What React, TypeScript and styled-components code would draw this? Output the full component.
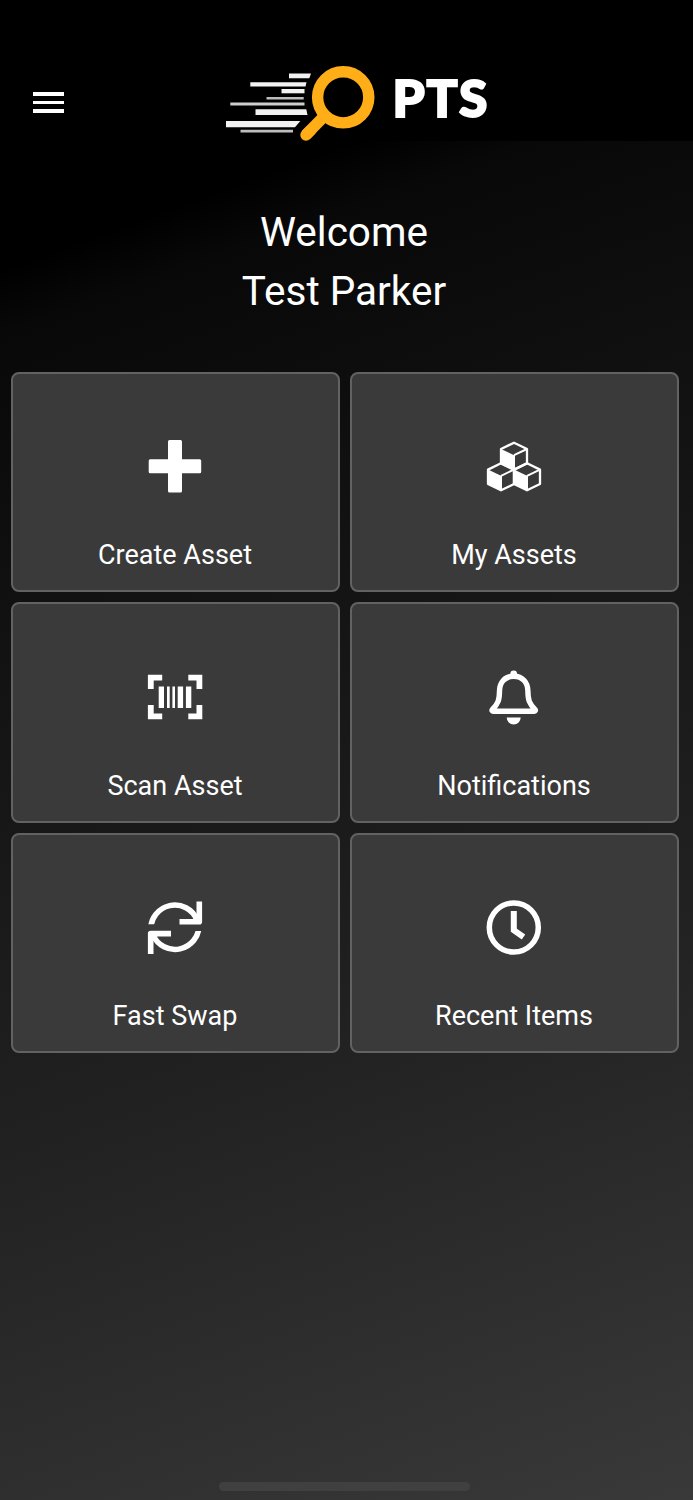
import React from 'react';
import styled, { createGlobalStyle } from 'styled-components';

const GlobalStyle = createGlobalStyle`
  * { box-sizing: border-box; }
  body { margin: 0; background: #000; }
`;

const Screen = styled.div`
  width: 693px;
  height: 1500px;
  display: flex;
  flex-direction: column;
  background: #000;
  color: #fff;
  font-family: Roboto, 'Liberation Sans', sans-serif;
  overflow: hidden;
`;

const Header = styled.header`
  flex: none;
  height: 141px;
  padding: 64px 0 0 33px;
  display: flex;
  align-items: flex-start;
`;

const MenuButton = styled.button`
  width: 31px;
  height: 21px;
  margin: 28px 162px 0 0;
  padding: 0;
  border: 0;
  background: none;
  display: flex;
  flex-direction: column;
  justify-content: space-between;
`;

const MenuLine = styled.span`
  display: block;
  height: 3.6px;
  background: #fff;
`;

const Logo = styled.svg`
  display: block;
  width: 264px;
  height: 77px;
`;

const Main = styled.main`
  flex: 1;
  display: flex;
  flex-direction: column;
  background: linear-gradient(160deg, #000 8%, #080808 12%, #141414 36%, #212121 63%, #393939 100%);
`;

const Welcome = styled.h1`
  margin: 0;
  padding: 62px 5px 0 0;
  height: 230.5px;
  font-size: 40.5px;
  line-height: 58.5px;
  font-weight: 400;
  text-align: center;
`;

const Grid = styled.div`
  display: grid;
  grid-template-columns: 329px 329px;
  grid-auto-rows: 220.5px;
  gap: 10px;
  padding-left: 11px;
`;

const Tile = styled.button`
  display: flex;
  flex-direction: column;
  align-items: center;
  padding: 62.5px 1px 0 0;
  border: 2px solid #626262;
  border-radius: 8px;
  background: #3a3a3a;
  color: #fff;
  font: inherit;
`;

const TileIcon = styled.svg`
  width: 60px;
  height: 60px;
  display: block;
  fill: #fff;
`;

const TileLabel = styled.span`
  margin-top: 42px;
  font-size: 27px;
  line-height: 34px;
`;

const HomeIndicator = styled.div`
  width: 251px;
  height: 9px;
  margin: auto 0 9px 219px;
  border-radius: 5px;
  background: #404040;
`;

const PlusIcon = () => (
  <TileIcon viewBox="0 0 60 60">
    <path d="M24.500 4h11a1.500 1.500 0 0 1 1.500 1.500V23.300H54.700a1.500 1.500 0 0 1 1.500 1.500V35.700a1.500 1.500 0 0 1-1.500 1.500H37V55a1.500 1.500 0 0 1-1.500 1.500H24.500a1.500 1.500 0 0 1-1.500-1.500V37.200H5.200a1.500 1.500 0 0 1-1.500-1.500V24.800a1.500 1.500 0 0 1 1.500-1.500H23V5.500A1.500 1.500 0 0 1 24.500 4z" />
  </TileIcon>
);

const Cube = ({ x, y }: { x: number; y: number }) => (
  <g transform={`translate(${x} ${y})`}>
    <path d="M0 0L13 -6.300L26 0V14.400L13 20.700L0 14.400z" fill="none" stroke="#fff" strokeWidth="2.300" strokeLinejoin="round" />
    <path d="M0 0L13 6.200V20.700L0 14.400z" />
    <path d="M13 6.200L26 0M13 6.200V20.500" fill="none" stroke="#fff" strokeWidth="2" />
  </g>
);

const CubesIcon = () => (
  <TileIcon viewBox="0 0 60 60">
    <Cube x={17} y={13} />
    <Cube x={4} y={33.600} />
    <Cube x={30} y={33.600} />
  </TileIcon>
);

const ScanIcon = () => (
  <TileIcon viewBox="0 0 60 60">
    <g fill="none" stroke="#fff" strokeWidth="5.800" transform="translate(0 -0.5)">
      <path d="M5.800 22.500V11.200H17.200M43.300 11.200H54.400V22.500M54.400 38.500V49.800H43.300M17.200 49.800H5.800V38.500" />
    </g>
    <path d="M13.700 19.400h5.300v21.700h-5.300zM22 19.400h2.700v21.700H22zM27.400 19.400h2.600v21.700h-2.600zM32.700 19.400h5.400v21.700h-5.400zM40.900 19.400h5.400v21.700h-5.400z" />
  </TileIcon>
);

const BellIcon = () => (
  <TileIcon viewBox="0 0 60 60">
    <path d="M29.700 9.200C20.700 9.200 15.500 15.800 15.500 24C15.500 33 14.200 36.500 8.300 42.600C7.700 43.500 8.100 44.300 9 44.300H50.400C51.300 44.300 51.700 43.500 51.100 42.600C45.200 36.500 43.900 33 43.900 24C43.900 15.800 38.700 9.200 29.700 9.200z" fill="none" stroke="#fff" strokeWidth="5.400" strokeLinejoin="round" />
    <path d="M26.300 9V6.800a3.400 3.400 0 0 1 6.800 0V9zM22.700 50.500h14a7 7 0 0 1-14 0z" />
  </TileIcon>
);

const SwapIcon = () => (
  <TileIcon viewBox="0 0 60 60">
    <defs>
      <clipPath id="swap-top"><path d="M0 0H60V27.300H0z" /></clipPath>
      <clipPath id="swap-bottom"><path d="M0 34H60V60H0z" /></clipPath>
    </defs>
    <g fill="none" stroke="#fff" strokeWidth="5.600">
      <path clipPath="url(#swap-top)" d="M5.800 33A24 24 0 0 1 52 23" />
      <path clipPath="url(#swap-bottom)" d="M54 28A24 24 0 0 1 8 38" />
      <path d="M54.300 4.500V24.700H34.500M5.700 57V36.600H26" strokeLinejoin="round" />
    </g>
    <path d="M47 23L54 15V25zM13 38.500L6 46V36z" />
  </TileIcon>
);

const ClockIcon = () => (
  <TileIcon viewBox="0 0 60 60">
    <circle cx="29.800" cy="30.500" r="24.500" fill="none" stroke="#fff" strokeWidth="5.500" />
    <path d="M29.800 14V33.300L39.500 40" fill="none" stroke="#fff" strokeWidth="6" />
  </TileIcon>
);

const PtsLogo = () => (
  <Logo viewBox="226 64 264 77">
    <g fill="#f2f2f2">
      <path d="M289 73.500H311L309.300 78.300H289z" />
      <path d="M250.300 82.300H306.500L305.500 86.500H250.300z" />
      <path d="M281.500 89H304.500V93.300H281.500z" />
      <path d="M266.500 97H303.700V99.500H266.500z" opacity=".78" />
      <path d="M230.300 102.600H304.500V105.600H230.300z" opacity=".85" />
      <path d="M255.500 109.300H306.300L307.500 115H255.500z" />
      <path d="M226 121H300.300L295 127.300H226z" />
      <path d="M240.500 129.800H293V132.500H240.500z" opacity=".78" />
    </g>
    <g fill="none" stroke="#ffae18">
      <circle cx="343.200" cy="97.300" r="25.600" strokeWidth="11.400" />
      <path d="M322.500 118L306 134.800" strokeWidth="11.400" />
      <path d="M311 130L306 135" strokeWidth="11.400" strokeLinecap="round" />
    </g>
    <text x="392.500" y="116.500" fill="#fff" stroke="#fff" strokeWidth="2" fontFamily="Lato, sans-serif" fontWeight="900" fontSize="51.500" textLength="95" lengthAdjust="spacing">PTS</text>
  </Logo>
);

const tiles = [
  { label: 'Create Asset', Icon: PlusIcon },
  { label: 'My Assets', Icon: CubesIcon },
  { label: 'Scan Asset', Icon: ScanIcon },
  { label: 'Notifications', Icon: BellIcon },
  { label: 'Fast Swap', Icon: SwapIcon },
  { label: 'Recent Items', Icon: ClockIcon },
];

export default function App() {
  return (
    <Screen>
      <GlobalStyle />
      <Header>
        <MenuButton aria-label="Menu">
          <MenuLine />
          <MenuLine />
          <MenuLine />
        </MenuButton>
        <PtsLogo />
      </Header>
      <Main>
        <Welcome>
          Welcome
          <br />
          Test Parker
        </Welcome>
        <Grid>
          {tiles.map(({ label, Icon }) => (
            <Tile key={label}>
              <Icon />
              <TileLabel>{label}</TileLabel>
            </Tile>
          ))}
        </Grid>
        <HomeIndicator />
      </Main>
    </Screen>
  );
}
